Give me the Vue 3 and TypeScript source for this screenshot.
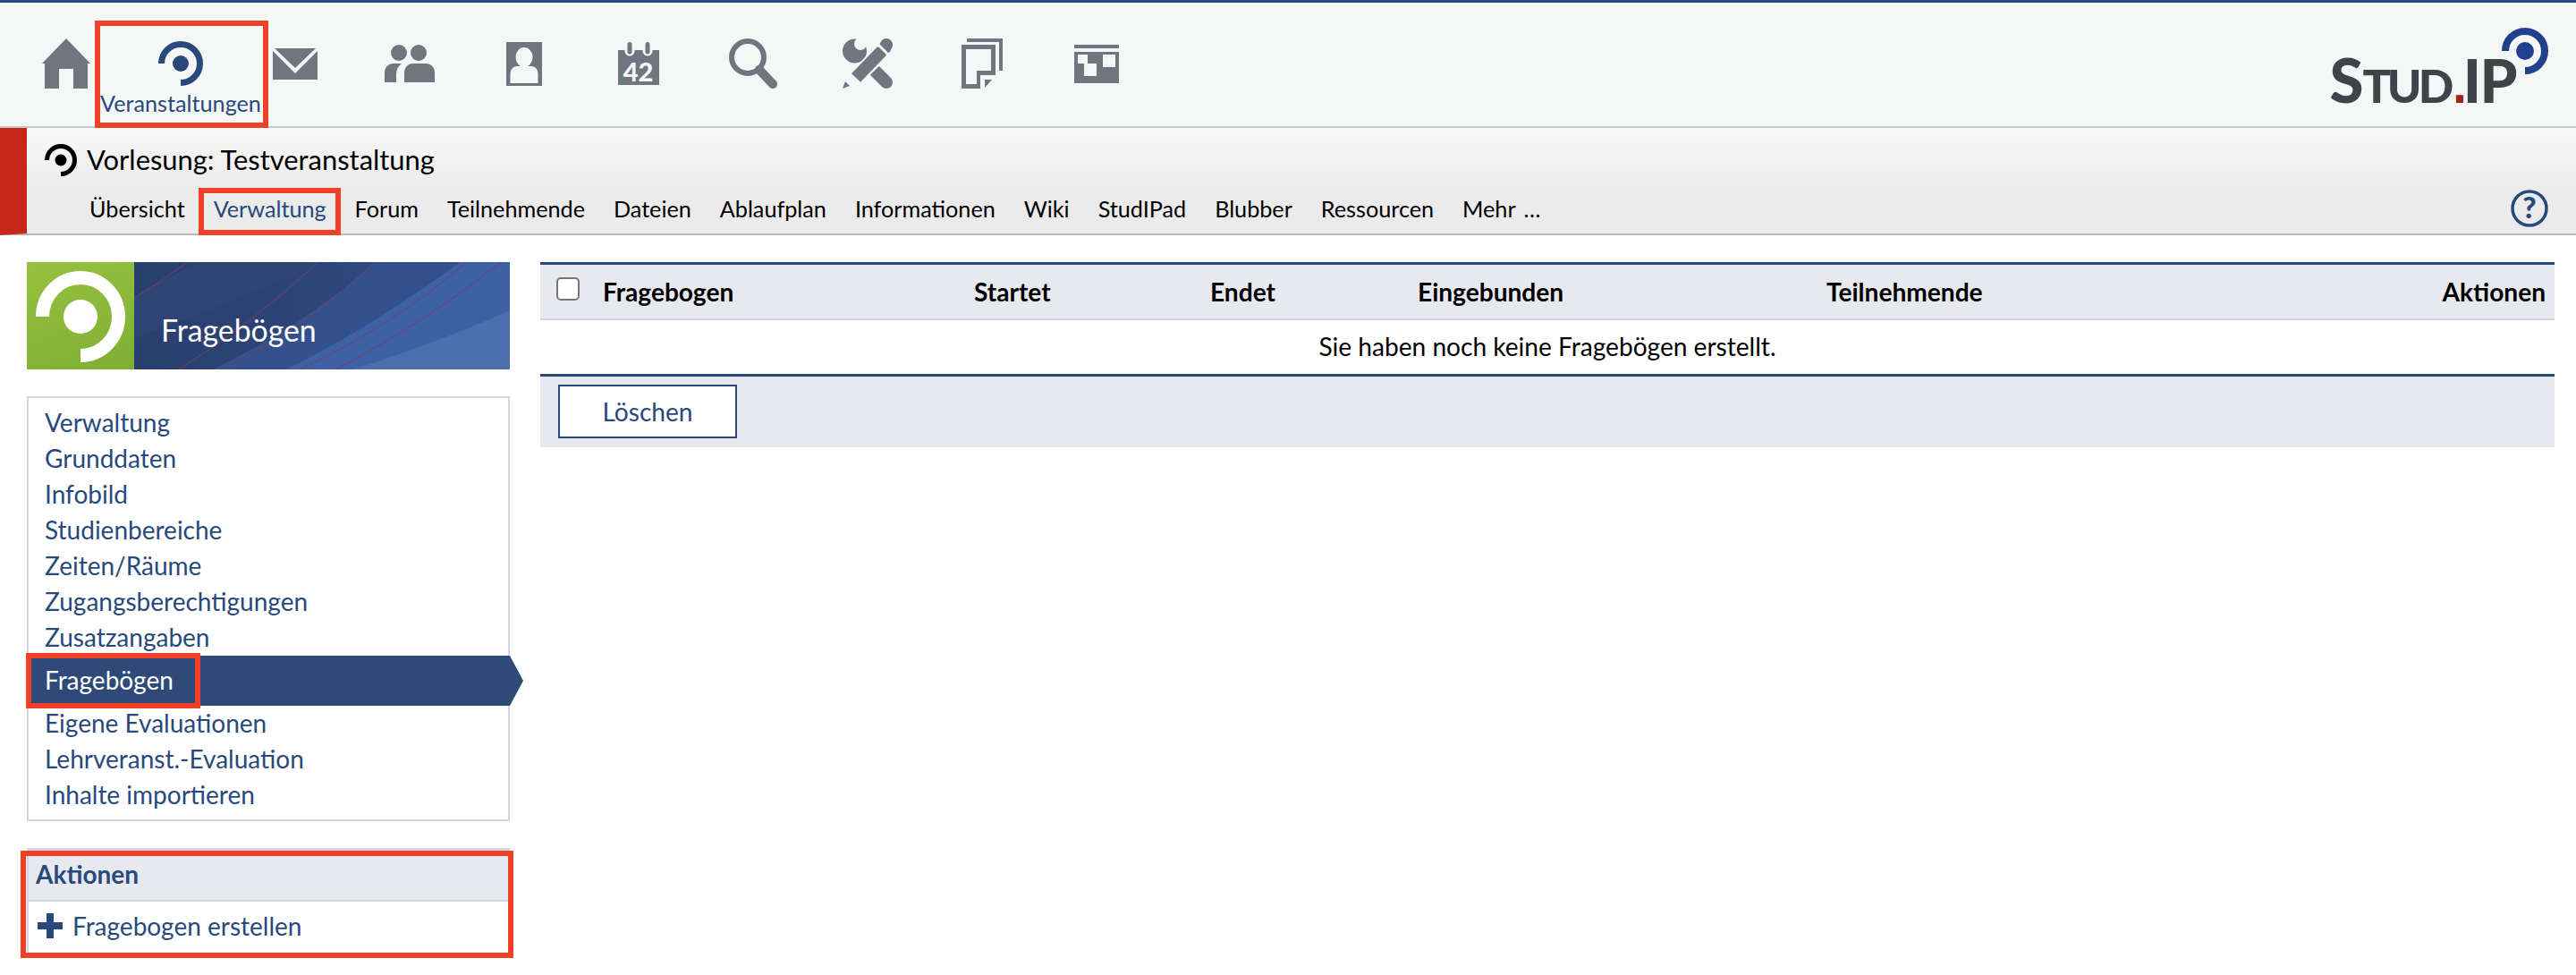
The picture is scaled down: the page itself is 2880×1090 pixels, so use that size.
<script setup lang="ts">
const tabs: string[] = ['Übersicht', 'Verwaltung', 'Forum', 'Teilnehmende', 'Dateien', 'Ablaufplan', 'Informationen', 'Wiki', 'StudIPad', 'Blubber', 'Ressourcen', 'Mehr …']
const before: string[] = ['Verwaltung', 'Grunddaten', 'Infobild', 'Studienbereiche', 'Zeiten/Räume', 'Zugangsberechtigungen', 'Zusatzangaben']
const after: string[] = ['Eigene Evaluationen', 'Lehrveranst.-Evaluation', 'Inhalte importieren']
</script>

<template>
  <div class="page">
    <header class="topbar">
      <nav class="mainnav">
        <a class="navitem">
          <span class="ico"><svg width="54" height="56" viewBox="0 0 54 56"><path fill="#6f7680" d="M27 0 54 28H51V56H35V34H19V56H3V28H0Z"/></svg></span>
        </a>
        <a class="navitem active">
          <span class="ico"><svg width="50" height="50" viewBox="0 0 50 50"><path fill="none" stroke="#28497c" stroke-width="7" d="M3.5 25A21.5 21.5 0 1 1 25 46.5"/><circle cx="25" cy="25" r="9" fill="#28497c"/></svg></span>
          <span class="navlabel">Veranstaltungen</span>
          <i class="mark mark-nav"></i>
        </a>
        <a class="navitem">
          <span class="ico"><svg width="50" height="35" viewBox="0 0 50 35"><path fill="#6f7680" d="M2 0H48L25 22ZM0 3 25 28 50 3V35H0Z"/></svg></span>
        </a>
        <a class="navitem">
          <span class="ico"><svg width="56" height="42" viewBox="0 0 56 42"><g fill="#6f7680"><ellipse cx="16" cy="9" rx="9" ry="9"/><ellipse cx="38" cy="9" rx="9" ry="9"/><path d="M0 42V32C0 25 4 21 10 21H19C15 24 13 28 13 33V42Z"/><path d="M22 42V32C22 25 26 21 32 21H46C52 21 56 25 56 32V42Z"/></g></svg></span>
        </a>
        <a class="navitem">
          <span class="ico"><svg width="40" height="49" viewBox="0 0 40 49"><rect width="40" height="49" fill="#6f7680"/><ellipse cx="20" cy="17" rx="9.5" ry="11" fill="#f5f7f7"/><path fill="#f5f7f7" d="M4.500 46V36C4.500 30 8 27 13 27H27C32 27 35.500 30 35.500 36V46Z"/></svg></span>
        </a>
        <a class="navitem">
          <span class="ico"><svg width="46" height="56" viewBox="0 -4 46 56"><path fill="#6f7680" d="M0 9H46V48H0Z"/><g fill="none" stroke="#f5f7f7" stroke-width="11" stroke-linecap="round"><path d="M13 2V10M33 2V10"/></g><g fill="none" stroke="#6f7680" stroke-width="5" stroke-linecap="round"><path d="M13 2.500V11M33 2.500V11"/></g><text x="22.500" y="44" text-anchor="middle" class="caltext">42</text></svg></span>
        </a>
        <a class="navitem">
          <span class="ico"><svg width="55" height="56" viewBox="0 0 55 56"><circle cx="21" cy="21" r="18" fill="none" stroke="#6f7680" stroke-width="6"/><path d="M34 35 49 51" fill="none" stroke="#6f7680" stroke-width="10" stroke-linecap="round"/></svg></span>
        </a>
        <a class="navitem">
          <span class="ico"><svg width="56" height="56" viewBox="0 0 56 56"><circle cx="13.500" cy="14" r="13.500" fill="#6f7680"/><circle cx="20" cy="6" r="7" fill="#f5f7f7"/><path d="M30 30 49 49" fill="none" stroke="#6f7680" stroke-width="14" stroke-linecap="round"/><path d="M11 48 50 9" fill="none" stroke="#f5f7f7" stroke-width="18"/><path d="M15 44 44 14" fill="none" stroke="#6f7680" stroke-width="14"/><path d="M47 11 49 7" fill="none" stroke="#6f7680" stroke-width="14" stroke-linecap="round"/><path d="M39 6 52 19" fill="none" stroke="#f5f7f7" stroke-width="3"/><path fill="#6f7680" d="M0 56 3 48 8 53Z"/></svg></span>
        </a>
        <a class="navitem">
          <span class="ico"><svg width="46" height="56" viewBox="0 0 46 56"><path fill="#6f7680" d="M6 0H46V36H42V4H6Z"/><path fill="#6f7680" fill-rule="evenodd" d="M0 7H38V41H21V56H0ZM5 12V51H17V36H33V12Z"/><path fill="#6f7680" d="M26 55V46H34Z"/></svg></span>
        </a>
        <a class="navitem">
          <span class="ico"><svg width="50" height="43" viewBox="0 0 50 43"><path fill="#6f7680" d="M0 0H50V4H0Z"/><path fill="#6f7680" fill-rule="evenodd" d="M0 8H50V43H0ZM4 11V21H11V35H25V21H15V11ZM32 11V25H46V11Z"/></svg></span>
        </a>
      </nav>
      <div class="logo">
        <svg class="logo-ring" width="54" height="54" viewBox="0 0 54 54"><path fill="none" stroke="#21418f" stroke-width="8" d="M5 27A22 22 0 1 1 27 49"/><circle cx="27" cy="27" r="10" fill="#21418f"/></svg>
        <span class="logo-s">S</span><span class="logo-tud">TUD</span><span class="logo-dot">.</span><span class="logo-ip">IP</span>
      </div>
    </header>

    <section class="subhead">
      <div class="title">
        <svg width="36" height="36" viewBox="0 0 50 50"><path fill="none" stroke="#000" stroke-width="7" d="M3.500 25A21.500 21.500 0 1 1 25 46.500"/><circle cx="25" cy="25" r="9" fill="#000"/></svg>
        <span>Vorlesung: Testveranstaltung</span>
      </div>
      <div class="tabrow">
        <nav class="tabs">
          <a v-for="t in tabs" :key="t" class="tab" :class="{ current: t === 'Verwaltung' }">{{ t }}<i v-if="t === 'Verwaltung'" class="mark mark-tab"></i></a>
        </nav>
        <svg class="help" width="42" height="42" viewBox="0 0 42 42"><circle cx="21" cy="21" r="19" fill="none" stroke="#28497c" stroke-width="3.500"/><text x="21" y="32" text-anchor="middle" class="helptext">?</text></svg>
      </div>
    </section>

    <div class="body">
      <aside class="sidebar">
        <div class="banner">
          <div class="banner-logo">
            <svg width="100" height="102" viewBox="0 0 100 102"><path fill="none" stroke="#fff" stroke-width="15" d="M7.500 51A42.500 43.500 0 1 1 50 94.500"/><ellipse cx="50" cy="51" rx="19" ry="19" fill="#fff"/></svg>
          </div>
          <div class="banner-art">
            <svg class="banner-bg" width="420" height="120" viewBox="0 0 420 120" preserveAspectRatio="none">
              <defs>
                <linearGradient id="bng" x1="0" y1="0" x2="1" y2="0"><stop offset="0" stop-color="#293f6d"/><stop offset="0.5" stop-color="#2d4578"/><stop offset="1" stop-color="#34538f"/></linearGradient>
              </defs>
              <rect width="420" height="120" fill="url(#bng)"/>
              <path d="M0 40 Q60 0 90 0H210Q100 50 0 85Z" fill="#2f4676" opacity=".9"/>
              <path d="M88 120Q190 70 270 0H420V120Z" fill="#33518c"/>
              <path d="M170 120Q270 70 364 0H420V120Z" fill="#3e61a6"/>
              <path d="M245 120Q340 90 420 54V120Z" fill="#4a6fac"/>
              <g fill="none" stroke="#7c3c62" stroke-width="1">
                <path d="M0 40Q30 22 60 0"/>
                <path d="M50 120Q130 70 206 0"/>
                <path d="M103 120Q195 70 269 0"/>
                <path d="M186 120Q290 70 372 0"/>
                <path d="M226 120Q330 65 410 0"/>
              </g>
            </svg>
            <span class="banner-title">Fragebögen</span>
          </div>
        </div>

        <ul class="menu">
          <li v-for="m in before" :key="m"><a>{{ m }}</a></li>
          <li class="on"><a>Fragebögen</a><i class="mark mark-side"></i></li>
          <li v-for="m in after" :key="m"><a>{{ m }}</a></li>
        </ul>

        <div class="actions">
          <h2>Aktionen</h2>
          <a class="action">
            <svg width="28" height="28" viewBox="0 0 28 28"><path fill="#28497c" d="M10 0H18V10H28V18H18V28H10V18H0V10H10Z"/></svg>
            <span>Fragebogen erstellen</span>
          </a>
          <i class="mark mark-actions"></i>
        </div>
      </aside>

      <main class="main">
        <table class="grid">
          <colgroup>
            <col style="width: 60px" /><col style="width: 415px" /><col style="width: 264px" /><col style="width: 232px" /><col style="width: 457px" /><col style="width: 600px" /><col />
          </colgroup>
          <thead>
            <tr>
              <th class="chk"><input type="checkbox" class="box" /></th>
              <th>Fragebogen</th>
              <th>Startet</th>
              <th>Endet</th>
              <th>Eingebunden</th>
              <th>Teilnehmende</th>
              <th class="right">Aktionen</th>
            </tr>
          </thead>
          <tbody>
            <tr><td colspan="7" class="empty">Sie haben noch keine Fragebögen erstellt.</td></tr>
          </tbody>
          <tfoot>
            <tr><td colspan="7" class="foot"><button class="btn" type="button">Löschen</button></td></tr>
          </tfoot>
        </table>
      </main>
    </div>
  </div>
</template>

<style>
html, body { margin: 0; background: #fff; }
</style>

<style scoped>
.page { font-family: Lato, "Noto Sans", sans-serif; color: #000; width: 2880px; height: 1090px; overflow: hidden; background: #fff; }
a { text-decoration: none; }
.mark { position: absolute; border: 6px solid #ee4127; pointer-events: none; box-sizing: border-box; display: block; }

.topbar { box-sizing: border-box; height: 143px; border-top: 3px solid #28497c; border-bottom: 2px solid #c5c7ca; background: #f5f7f7; display: flex; justify-content: space-between; }
.mainnav { display: flex; padding: 40px 0 0 10px; }
.navitem { position: relative; width: 128px; display: flex; flex-direction: column; align-items: center; }
.ico { height: 56px; display: flex; align-items: center; justify-content: center; }
.ico svg { display: block; }
.navlabel { color: #28497c; font-size: 25.200px; line-height: 30px; margin-top: 1px; white-space: nowrap; }
.mark-nav { left: -32px; right: -34px; top: -20px; height: 120px; }
.caltext { font-family: Lato, sans-serif; font-weight: 900; font-size: 29px; fill: #f5f7f7; }

.logo { position: relative; display: flex; align-items: baseline; align-self: flex-start; margin: 86px 67px 0 0; height: 0; color: #3f4448; font-family: Lato, sans-serif; font-weight: 900; line-height: 0; }
.logo-ring { position: absolute; right: -37px; top: -59px; }
.logo-s { font-size: 69px; margin-right: -1px; }
.logo-tud { font-size: 52px; letter-spacing: -4px; }
.logo-dot { color: #a3211a; font-family: "DejaVu Sans", sans-serif; font-weight: 700; font-size: 46px; margin: 0 -1px 0 2px; letter-spacing: -4px; }
.logo-ip { font-size: 67px; letter-spacing: -1.500px; }

.subhead { box-sizing: border-box; height: 120px; border-left: 30px solid #c6271a; border-bottom: 2px solid #b8b8bc; background: linear-gradient(#f8f8f8, #ebebec 60%, #ebebec); display: flex; flex-direction: column; }
.title { display: flex; align-items: center; gap: 11px; padding: 18px 0 0 20px; height: 36px; font-size: 30.900px; line-height: 36px; }
.tabrow { display: flex; justify-content: space-between; align-items: center; margin-top: 11px; padding: 0 31px 0 54px; height: 50px; }
.tabs { display: flex; }
.tab { position: relative; color: #000; font-size: 25.200px; line-height: 50px; padding: 0 16px; white-space: nowrap; word-spacing: 3px; }
.tab.current { color: #28497c; }
.mark-tab { left: -1px; top: 2px; height: 53px; width: 159px; }
.help { display: block; }
.helptext { font-family: Lato, sans-serif; font-weight: 900; font-size: 33px; fill: #28497c; }

.body { display: flex; padding: 30px 24px 0 30px; gap: 34px; }
.sidebar { width: 540px; flex: none; }
.banner { display: flex; height: 120px; }
.banner-logo { width: 120px; flex: none; background: linear-gradient(160deg, #97c140, #7eaf33); display: flex; align-items: center; justify-content: center; }
.banner-logo svg { display: block; margin-top: 1px; }
.banner-art { position: relative; flex: 1; overflow: hidden; }
.banner-bg { position: absolute; inset: 0; }
.banner-title { position: absolute; left: 30px; bottom: 26px; color: #fff; font-size: 33.800px; line-height: 36px; }

.menu { list-style: none; margin: 30px 0 0; padding: 8px 0 7px; border: 2px solid #d0d7e3; background: #fff; }
.menu li { position: relative; height: 40px; padding-left: 18px; color: #28497c; font-size: 28px; line-height: 38px; box-sizing: border-box; }
.menu li.on { height: 56px; margin: 0 -2px; padding-left: 20px; background: #2f4a79; color: #fff; line-height: 54px; }
.menu li.on::after { content: ""; position: absolute; left: 100%; top: 0; border-top: 28px solid transparent; border-bottom: 28px solid transparent; border-left: 15px solid #2f4a79; }
.mark-side { left: -1px; top: -3px; width: 195px; height: 62px; }

.actions { position: relative; margin-top: 30px; border: 2px solid #d0d7e3; border-top-width: 3px; background: #fff; }
.actions h2 { margin: 0; height: 57px; box-sizing: border-box; padding: 0 0 0 8px; background: #e7e9ef; border-bottom: 2px solid #d0d7e3; color: #28497c; font-size: 28px; font-weight: 700; line-height: 53px; }
.action { display: flex; align-items: center; gap: 11px; height: 54px; padding: 0 0 6px 10px; color: #28497c; font-size: 28px; }
.action svg { display: block; flex: none; }
.mark-actions { left: -9px; top: 0; height: 120px; width: 551px; }

.main { flex: 1; min-width: 0; }
.grid { width: 2252px; border-collapse: collapse; table-layout: fixed; font-size: 28.100px; }
.grid thead tr { height: 62px; }
.grid th { background: #e7e9ef; border-top: 3px solid #28497c; border-bottom: 2px solid #d0d7e3; padding: 0 10px; text-align: left; font-weight: 700; color: #000; white-space: nowrap; }
.grid th.right { text-align: right; }
.grid th.chk { padding: 0 0 0 18px; }
.box { appearance: none; display: block; width: 26px; height: 26px; margin: 0 0 6px; border: 2px solid #767676; border-radius: 5px; background: #fff; box-sizing: border-box; }
.empty { text-align: center; height: 58px; padding: 0 0 2px; color: #000; }
.foot { height: 81px; padding: 0 0 0 20px; background: #e7e9ef; border-top: 3px solid #28497c; box-sizing: border-box; }
.btn { display: block; box-sizing: border-box; width: 200px; height: 60px; border: 2px solid #28497c; background: #fff; color: #28497c; font: inherit; padding: 0; }
</style>
